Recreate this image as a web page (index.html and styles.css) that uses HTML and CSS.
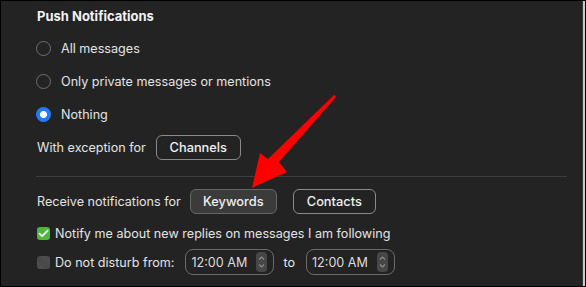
FILE: index.html
```html
<!DOCTYPE html>
<html>
<head>
<meta charset="utf-8">
<link rel="stylesheet" href="styles.css">
</head>
<body>
<div class="frame">
  <div class="panel">
    <div class="title">Push Notifications</div>
    <div class="row radio-row"><span class="radio"></span><span>All messages</span></div>
    <div class="row radio-row"><span class="radio"></span><span>Only private messages or mentions</span></div>
    <div class="row radio-row"><span class="radio on"></span><span>Nothing</span></div>
    <div class="row btn-row"><span>With exception for</span><span class="btn btn-channels">Channels</span></div>
    <div class="divider"></div>
    <div class="row btn-row recv"><span>Receive notifications for</span><span class="btn btn-fill btn-kw">Keywords</span><span class="btn btn-contacts">Contacts</span></div>
    <div class="row check-row"><span class="check on"><svg width="11" height="9" viewBox="0 0 11 9"><path d="M1.5 4.6 L4.2 7.2 L9.6 1.6" fill="none" stroke="#fff" stroke-width="1.8" stroke-linecap="round" stroke-linejoin="round"/></svg></span><span>Notify me about new replies on messages I am following</span></div>
    <div class="row dnd-row">
      <span class="check off"></span><span class="dnd-label">Do not disturb from:</span>
      <span class="time first"><span class="time-text">12:00 AM</span><span class="stepper"><svg width="7" height="16" viewBox="0 0 7 16"><path d="M1 5.5 L3.5 3 L6 5.5 M1 10.5 L3.5 13 L6 10.5" fill="none" stroke="#8d8d8d" stroke-width="1.1"/></svg></span></span>
      <span class="to">to</span>
      <span class="time"><span class="time-text">12:00 AM</span><span class="stepper"><svg width="7" height="16" viewBox="0 0 7 16"><path d="M1 5.5 L3.5 3 L6 5.5 M1 10.5 L3.5 13 L6 10.5" fill="none" stroke="#8d8d8d" stroke-width="1.1"/></svg></span></span>
    </div>
  </div>
  <svg class="arrow" width="586" height="287" viewBox="0 0 586 287">
    <path d="M335 95.5 L336 97 L279 162 L287 172 L252 188 L260 153 L268 159 L334 95 Z" fill="#fe0000"/>
  </svg>
</div>
</body>
</html>
```
FILE: styles.css
```css
* { box-sizing: border-box; }
html, body { margin: 0; padding: 0; background: #000; }
body {
  width: 586px;
  height: 287px;
  overflow: hidden;
  font-family: Inter, "Noto Sans", sans-serif;
  font-size: 12.6px;
  color: #e4e4e4;
}
.frame {
  position: relative;
  width: 586px;
  height: 287px;
  padding: 1px;
}
.panel {
  width: 584px;
  height: 285px;
  background: #232323;
  border-right: 2px solid #c9c9c9;
  box-shadow: inset -1px 0 0 #3a3a3a;
  padding: 0 0 0 35px;
  display: flex;
  flex-direction: column;
}
.title {
  font-weight: 700;
  font-size: 13px;
  color: #f2f2f2;
  height: 30px;
  line-height: 30px;
  padding-left: 1px;
}
.row {
  display: flex;
  align-items: center;
}
.radio-row {
  height: 33px;
  gap: 10px;
  padding-top: 1px;
}
.radio {
  width: 15px;
  height: 15px;
  border-radius: 50%;
  border: 1.2px solid #707070;
  flex: none;
}
.radio.on {
  border: none;
  background: radial-gradient(circle, #ffffff 0 3.2px, #1f7cf4 3.8px);
}
.btn-row {
  height: 35px;
  padding-left: 1px;
}
.btn {
  display: inline-flex;
  align-items: center;
  justify-content: center;
  height: 25px;
  border: 1px solid #8a8a8a;
  border-radius: 6px;
  font-weight: 500;
  font-size: 12.8px;
  color: #f0f0f0;
}
.btn-channels { width: 85px; margin-left: 10px; }
.divider {
  height: 1px;
  background: #3d3d3d;
  width: 531px;
  margin-top: 11px;
}
.recv { height: 49px; }
.btn-kw { width: 87px; margin-left: 9px; }
.btn-fill { background: #3b3b3b; border-color: #666; }
.btn-contacts { width: 83px; margin-left: 16px; }
.check-row {
  height: 15px;
  gap: 5px;
  padding-left: 1px;
}
.check {
  width: 13px;
  height: 13px;
  border-radius: 3px;
  flex: none;
  display: inline-flex;
  align-items: center;
  justify-content: center;
}
.check.on { background: #4fb73a; }
.check.off {
  background: #4a4a4a;
  background-image: repeating-linear-gradient(45deg, #505050 0 1px, #464646 1px 2px);
}
.dnd-row {
  height: 42px;
  padding-left: 1px;
}
.dnd-label { margin-left: 5px; }
.time {
  display: inline-flex;
  align-items: center;
  justify-content: space-between;
  width: 89px;
  height: 26px;
  border: 1px solid #6b6b6b;
  border-radius: 8px;
  padding: 0 6px 0 5px;
  color: #dcdcdc;
}
.time.first { margin-left: 11px; }
.stepper {
  width: 11px;
  height: 20px;
  border-radius: 4px;
  background: #474747;
  display: inline-flex;
  align-items: center;
  justify-content: center;
}
.to { margin-left: 9px; margin-right: 11px; }
.arrow {
  position: absolute;
  left: 0;
  top: 0;
  pointer-events: none;
}
```
